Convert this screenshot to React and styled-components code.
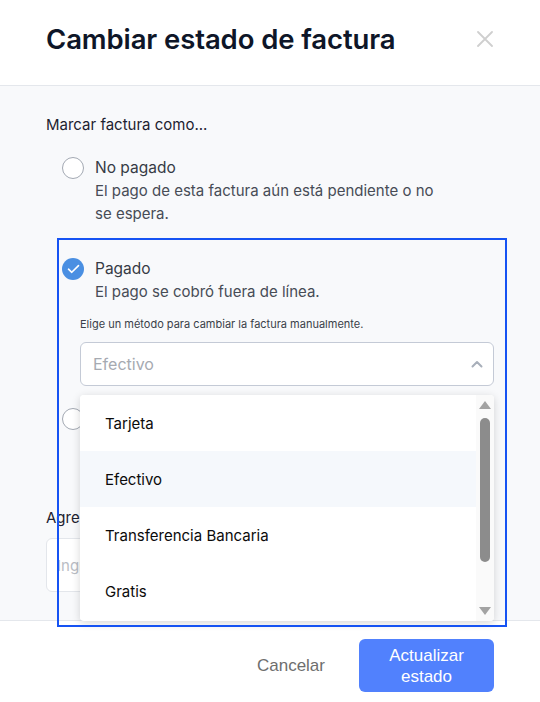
import React from 'react';
import styled, { createGlobalStyle } from 'styled-components';

const GlobalStyle = createGlobalStyle`
  html, body {
    margin: 0;
    padding: 0;
    background: #ffffff;
  }
  body {
    font-family: 'Inter', 'Noto Sans', sans-serif;
    -webkit-font-smoothing: antialiased;
  }
  * {
    box-sizing: border-box;
  }
`

const Modal = styled.div`
  width: 540px;
  height: 702px;
  display: flex;
  flex-direction: column;
  position: relative;
  overflow: hidden;
  background: #ffffff;
`

const Header = styled.div`
  height: 86px;
  padding: 0 46px;
  display: flex;
  align-items: center;
  justify-content: space-between;
  border-bottom: 1px solid #e4e7ec;
  flex-shrink: 0;
`

const Title = styled.h1`
  margin: 0 0 8px 0;
  font-size: 27.5px;
  font-weight: 600;
  letter-spacing: -0.1px;
  color: #0e1628;
`

const CloseButton = styled.button`
  width: 18px;
  height: 18px;
  padding: 0;
  margin: 0 0 8px 0;
  border: none;
  background: none;
  display: flex;
  align-items: center;
  justify-content: center;
  cursor: pointer;
`

const Body = styled.div`
  flex: 1;
  background: #f8f9fb;
  padding: 29px 46px 0 46px;
`

const Question = styled.div`
  font-size: 15px;
  line-height: 20px;
  color: #1d2230;
  margin-bottom: 21px;
`

const Options = styled.div`
  padding-left: 16px;
  display: flex;
  flex-direction: column;
`

const Option = styled.div`
  margin-bottom: ${p => p.$gap}px;
`

const OptionRow = styled.label`
  display: flex;
  align-items: flex-start;
  gap: 11px;
  cursor: pointer;
`

const Radio = styled.span`
  width: 22px;
  height: 22px;
  margin-top: 1px;
  border-radius: 50%;
  flex-shrink: 0;
  display: flex;
  align-items: center;
  justify-content: center;
  background: ${p => (p.$checked ? '#4a8fe2' : '#ffffff')};
  border: ${p => (p.$checked ? 'none' : '1px solid #a3a9b3')};
`

const OptionText = styled.div`
  display: flex;
  flex-direction: column;
  max-width: 350px;
`

const OptionTitle = styled.span`
  font-size: 15.5px;
  line-height: 23px;
  color: #363b45;
`

const OptionDesc = styled.span`
  font-size: 15px;
  line-height: 23px;
  color: #474c56;
`

const SubSection = styled.div`
  padding-left: 18px;
  margin-top: 13px;
`

const Hint = styled.div`
  font-size: 11px;
  line-height: 16px;
  color: #3a3f49;
  margin-bottom: 10px;
`

const SelectWrap = styled.div`
  position: relative;
`

const SelectBox = styled.div`
  height: 44px;
  padding: 0 10px 0 12px;
  border: 1px solid #c4cad6;
  border-radius: 6px;
  background: #ffffff;
  display: flex;
  align-items: center;
  justify-content: space-between;
`

const Placeholder = styled.span`
  font-size: 16px;
  color: #a6aab1;
`

const Dropdown = styled.div`
  position: absolute;
  top: 53px;
  left: 0;
  right: 0;
  height: 226px;
  background: #ffffff;
  border-radius: 4px;
  box-shadow: 0 2px 8px rgba(0, 0, 0, 0.16);
  display: flex;
  z-index: 10;
  overflow: hidden;
`

const OptionList = styled.ul`
  flex: 1;
  margin: 0;
  padding: 0;
  list-style: none;
`

const ListItem = styled.li`
  height: 56px;
  padding-left: 25px;
  display: flex;
  align-items: center;
  font-size: 15px;
  color: #0b0b0b;
  background: ${p => (p.$active ? '#f5f8fc' : '#ffffff')};
`

const ScrollBar = styled.div`
  width: 18px;
  background: #fafafa;
  display: flex;
  flex-direction: column;
  align-items: center;
  padding: 6px 0 6px 0;
`

const Arrow = styled.span`
  width: 0;
  height: 0;
  border-left: 6px solid transparent;
  border-right: 6px solid transparent;
  ${p => (p.$up
    ? 'border-bottom: 8px solid #a3a3a3;'
    : 'border-top: 8px solid #a3a3a3;')}
`

const Thumb = styled.span`
  width: 10px;
  height: 144px;
  margin-top: 9px;
  border-radius: 5px;
  background: #8c8c8c;
`

const Spacer = styled.span`
  flex: 1;
`

const NoteLabel = styled.div`
  font-size: 15px;
  line-height: 20px;
  color: #1d2230;
  margin-bottom: 10px;
`

const NoteInput = styled.input`
  width: 100%;
  height: 54px;
  padding: 0 10px;
  border: 1px solid #e3e6eb;
  border-radius: 6px;
  background: #ffffff;
  font-family: inherit;
  font-size: 15px;
  outline: none;
  &::placeholder {
    color: #b9bdc4;
  }
`

const Footer = styled.div`
  height: 82px;
  flex-shrink: 0;
  border-top: 1px solid #e4e7ec;
  padding: 8px 46px 0 0;
  display: flex;
  align-items: center;
  justify-content: flex-end;
  gap: 34px;
  background: #ffffff;
`

const CancelButton = styled.button`
  border: none;
  background: none;
  padding: 0;
  font-family: 'Liberation Sans', Arial, sans-serif;
  font-size: 17px;
  color: #6e6e6e;
  cursor: pointer;
`

const SubmitButton = styled.button`
  width: 135px;
  height: 53px;
  border: none;
  border-radius: 6px;
  background: #5181fd;
  color: #ffffff;
  font-family: 'Liberation Sans', Arial, sans-serif;
  font-size: 17px;
  line-height: 21px;
  padding: 0 18px;
  cursor: pointer;
`

const FocusFrame = styled.div`
  position: absolute;
  left: 57px;
  top: 238px;
  width: 450px;
  height: 389px;
  border: 2px solid #1653f3;
  pointer-events: none;
  z-index: 20;
`

const Check = () => (
  <svg width="13" height="10" viewBox="0 0 13 10" fill="none">
    <path d="M1.5 5.2 L4.8 8.3 L11.5 1.6" stroke="#ffffff" strokeWidth="1.6" strokeLinecap="round" strokeLinejoin="round" />
  </svg>
)

const ChevronUp = () => (
  <svg width="12" height="8" viewBox="0 0 12 8" fill="none">
    <path d="M1.5 6.5 L6 2 L10.5 6.5" stroke="#a8afba" strokeWidth="2" strokeLinecap="round" strokeLinejoin="round" />
  </svg>
)

const CloseIcon = () => (
  <svg width="16" height="16" viewBox="0 0 16 16" fill="none">
    <path d="M1 1 L15 15 M15 1 L1 15" stroke="#cfcfcf" strokeWidth="1.8" strokeLinecap="round" />
  </svg>
)

const methods = ['Tarjeta', 'Efectivo', 'Transferencia Bancaria', 'Gratis', 'Otro']

export default function App() {
  return (
    <>
      <GlobalStyle />
      <Modal>
        <Header>
          <Title>Cambiar estado de factura</Title>
          <CloseButton aria-label="Cerrar"><CloseIcon /></CloseButton>
        </Header>
        <Body>
          <Question>Marcar factura como...</Question>
          <Options>
            <Option $gap={32}>
              <OptionRow>
                <Radio />
                <OptionText>
                  <OptionTitle>No pagado</OptionTitle>
                  <OptionDesc>El pago de esta factura aún está pendiente o no se espera.</OptionDesc>
                </OptionText>
              </OptionRow>
            </Option>
            <Option $gap={21}>
              <OptionRow>
                <Radio $checked><Check /></Radio>
                <OptionText>
                  <OptionTitle>Pagado</OptionTitle>
                  <OptionDesc>El pago se cobró fuera de línea.</OptionDesc>
                </OptionText>
              </OptionRow>
              <SubSection>
                <Hint>Elige un método para cambiar la factura manualmente.</Hint>
                <SelectWrap>
                  <SelectBox>
                    <Placeholder>Efectivo</Placeholder>
                    <ChevronUp />
                  </SelectBox>
                  <Dropdown>
                    <OptionList>
                      {methods.slice(0, 4).map(m => (
                        <ListItem key={m} $active={m === 'Efectivo'}>{m}</ListItem>
                      ))}
                    </OptionList>
                    <ScrollBar>
                      <Arrow $up />
                      <Thumb />
                      <Spacer />
                      <Arrow />
                    </ScrollBar>
                  </Dropdown>
                </SelectWrap>
              </SubSection>
            </Option>
            <Option $gap={32}>
              <OptionRow>
                <Radio />
                <OptionText>
                  <OptionTitle>Anulado</OptionTitle>
                  <OptionDesc>La factura se canceló y ya no se cobrará al cliente.</OptionDesc>
                </OptionText>
              </OptionRow>
            </Option>
          </Options>
          <NoteLabel>Agregar una nota (opcional)</NoteLabel>
          <NoteInput placeholder="Ingresa una nota para esta factura" />
        </Body>
        <Footer>
          <CancelButton>Cancelar</CancelButton>
          <SubmitButton>Actualizar estado</SubmitButton>
        </Footer>
        <FocusFrame />
      </Modal>
    </>
  )
}
